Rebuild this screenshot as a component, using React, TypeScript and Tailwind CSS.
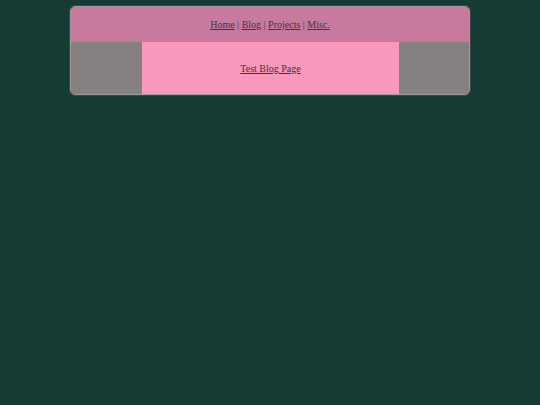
import React from 'react';

const links = ['Home', 'Blog', 'Projects', 'Misc.'];

export default function App() {
  return (
    <div className="min-h-[405px] w-full bg-[#173b34] pt-[5px]" style={{ fontFamily: '"Liberation Serif", "Times New Roman", serif' }}>
      <div className="mx-auto w-[402px] rounded-[6px] border border-[#3e4646]">
        <div className="overflow-hidden rounded-[5px] border border-[#9a9a9a]">
          <div className="flex h-[35px] items-center justify-center whitespace-pre bg-[#c77a9e] text-[10px] text-[#3b3642]">
            {links.map((l, i) => (
              <React.Fragment key={l}>
                {i > 0 && <span> | </span>}
                <a href="#" className="underline">{l}</a>
              </React.Fragment>
            ))}
          </div>
          <div className="grid h-[52px] grid-cols-[71px_1fr_70px]">
            <div className="bg-[#878080]" />
            <div className="flex items-center justify-center bg-[#f898bc] text-[10px] text-[#3b3642]">
              <a href="#" className="underline">Test Blog Page</a>
            </div>
            <div className="bg-[#878080]" />
          </div>
        </div>
      </div>
    </div>
  );
}
